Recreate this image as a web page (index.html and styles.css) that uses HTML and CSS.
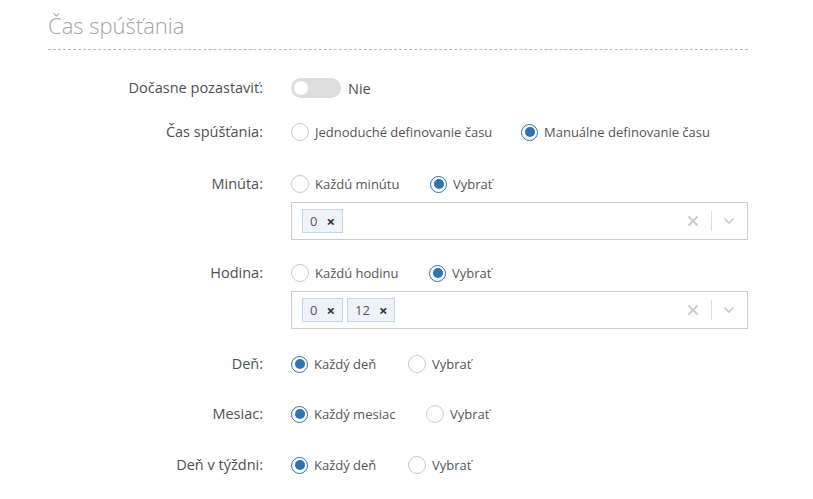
FILE: index.html
```html
<!DOCTYPE html>
<html lang="sk">
<head>
<meta charset="utf-8">
<link rel="stylesheet" href="styles.css">
</head>
<body>
<div class="page">
  <h2 class="title">Čas spúšťania</h2>

  <div class="row r-toggle">
    <div class="label">Dočasne pozastaviť:</div>
    <div class="field">
      <span class="toggle"><span class="knob"></span></span>
      <span class="toggle-text">Nie</span>
    </div>
  </div>

  <div class="row r-type">
    <div class="label">Čas spúšťania:</div>
    <div class="field">
      <label class="radio w-simple"><span class="dot"></span>Jednoduché definovanie času</label>
      <label class="radio on"><span class="dot"></span>Manuálne definovanie času</label>
    </div>
  </div>

  <div class="row r-min">
    <div class="label">Minúta:</div>
    <div class="field col">
      <div class="radios">
        <label class="radio w-min"><span class="dot"></span>Každú minútu</label>
        <label class="radio on"><span class="dot"></span>Vybrať</label>
      </div>
      <div class="select">
        <div class="tags">
          <span class="tag">0<span class="x">×</span></span>
        </div>
        <div class="ctrls">
          <svg class="clear" width="12" height="12" viewBox="0 0 12 12"><path d="M1.5 1.5 L10.5 10.5 M10.5 1.5 L1.5 10.5" fill="none" stroke="#cbcbcb" stroke-width="2"/></svg>
          <span class="sep"></span>
          <svg class="chev" width="12" height="8" viewBox="0 0 12 8"><path d="M1.5 1.5 L6 6 L10.5 1.5" fill="none" stroke="#c8c8c8" stroke-width="1.6"/></svg>
        </div>
      </div>
    </div>
  </div>

  <div class="row r-hod">
    <div class="label">Hodina:</div>
    <div class="field col">
      <div class="radios">
        <label class="radio w-hod"><span class="dot"></span>Každú hodinu</label>
        <label class="radio on"><span class="dot"></span>Vybrať</label>
      </div>
      <div class="select">
        <div class="tags">
          <span class="tag">0<span class="x">×</span></span>
          <span class="tag">12<span class="x">×</span></span>
        </div>
        <div class="ctrls">
          <svg class="clear" width="12" height="12" viewBox="0 0 12 12"><path d="M1.5 1.5 L10.5 10.5 M10.5 1.5 L1.5 10.5" fill="none" stroke="#cbcbcb" stroke-width="2"/></svg>
          <span class="sep"></span>
          <svg class="chev" width="12" height="8" viewBox="0 0 12 8"><path d="M1.5 1.5 L6 6 L10.5 1.5" fill="none" stroke="#c8c8c8" stroke-width="1.6"/></svg>
        </div>
      </div>
    </div>
  </div>

  <div class="row r-den">
    <div class="label">Deň:</div>
    <div class="field">
      <label class="radio on w-den"><span class="dot"></span>Každý deň</label>
      <label class="radio"><span class="dot"></span>Vybrať</label>
    </div>
  </div>

  <div class="row r-mes">
    <div class="label">Mesiac:</div>
    <div class="field">
      <label class="radio on w-mes"><span class="dot"></span>Každý mesiac</label>
      <label class="radio"><span class="dot"></span>Vybrať</label>
    </div>
  </div>

  <div class="row r-tyz">
    <div class="label">Deň v týždni:</div>
    <div class="field">
      <label class="radio on w-den"><span class="dot"></span>Každý deň</label>
      <label class="radio"><span class="dot"></span>Vybrať</label>
    </div>
  </div>
</div>
</body>
</html>
```

FILE: styles.css
```css
html, body {
  margin: 0;
  padding: 0;
  background: #fff;
}
body {
  font-family: "Open Sans", "Noto Sans", "Liberation Sans", sans-serif;
  color: #555;
}
.page {
  width: 700px;
  margin-left: 48px;
  padding-top: 9px;
}
.title {
  margin: 0;
  font-size: 22px;
  font-weight: 300;
  color: #a5a5a5;
  line-height: 32px;
  padding-bottom: 8px;
  border-bottom: 1px dashed #bbb;
}
.row {
  display: grid;
  grid-template-columns: 215px 457px;
  column-gap: 28px;
  align-items: start;
}
.label {
  text-align: right;
  font-size: 14.5px;
  line-height: 20px;
  color: #505050;
  white-space: nowrap;
}
.field {
  display: flex;
  align-items: center;
  min-height: 20px;
}
.field.col {
  flex-direction: column;
  align-items: stretch;
}
.radios {
  display: flex;
  align-items: center;
  height: 20px;
}
.r-toggle { margin-top: 28px; }
.r-type { margin-top: 24px; }
.r-min { margin-top: 32px; }
.r-hod { margin-top: 23px; }
.r-den { margin-top: 25px; }
.r-mes { margin-top: 30px; }
.r-tyz { margin-top: 31px; }

.toggle {
  width: 50px;
  height: 20px;
  border-radius: 10px;
  background: #dedede;
  position: relative;
  flex: none;
}
.knob {
  position: absolute;
  left: 3px;
  top: 3px;
  width: 14px;
  height: 14px;
  border-radius: 50%;
  background: #fff;
}
.toggle-text {
  margin-left: 7px;
  font-size: 14.5px;
  color: #505050;
}

.radio {
  display: flex;
  align-items: center;
  font-size: 13px;
  color: #555;
  line-height: 20px;
  white-space: nowrap;
  flex: none;
}
.radio .dot {
  width: 16px;
  height: 16px;
  border: 1px solid #c9c9c9;
  border-radius: 50%;
  margin-right: 6px;
  box-sizing: content-box;
  position: relative;
  flex: none;
}
.radio.on .dot {
  border: 1.5px solid #2f6fa8;
  width: 15px;
  height: 15px;
}
.radio.on .dot::after {
  content: "";
  position: absolute;
  left: 2.5px;
  top: 2.5px;
  width: 10px;
  height: 10px;
  border-radius: 50%;
  background: #2f73b2;
}
.w-simple { width: 230px; }
.w-min { width: 139px; }
.w-hod { width: 138px; }
.w-den { width: 117px; }
.w-mes { width: 135px; }

.select {
  margin-top: 8px;
  height: 38px;
  box-sizing: border-box;
  border: 1px solid #ccc;
  display: flex;
  align-items: center;
  justify-content: space-between;
  padding: 0 12px 0 10px;
}
.tags {
  display: flex;
  gap: 4px;
}
.tag {
  display: flex;
  align-items: center;
  height: 24px;
  box-sizing: border-box;
  border: 1px solid #c3d6e8;
  background: #eef3f9;
  font-size: 13px;
  color: #555;
  padding: 0 7px 0 7px;
}
.tag .x {
  margin-left: 9px;
  font-size: 15px;
  font-weight: 700;
  color: #333;
}
.ctrls {
  display: flex;
  align-items: center;
}
.clear {
  display: block;
}
.sep {
  width: 1px;
  height: 20px;
  background: #ddd;
  margin: 0 11px 0 12px;
}
.chev {
  display: block;
}
```
